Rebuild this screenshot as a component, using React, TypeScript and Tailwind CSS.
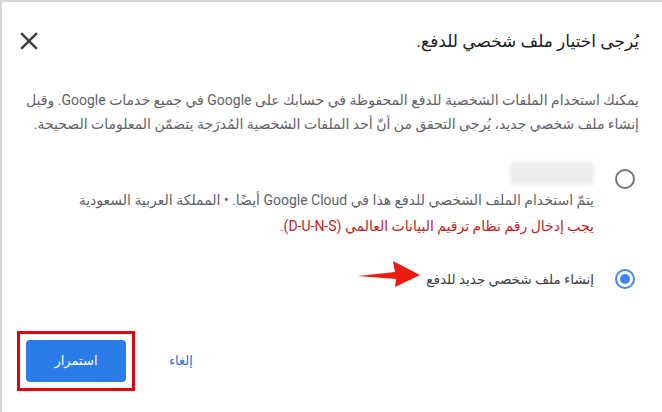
import React from "react";

function CloseIcon() {
  return (
    <svg width="30" height="30" viewBox="0 0 24 24" className="text-[#3c4043]">
      <path
        fill="currentColor"
        d="M19 6.41L17.59 5 12 10.59 6.41 5 5 6.41 10.59 12 5 17.59 6.41 19 12 13.41 17.59 19 19 17.59 13.41 12z"
      />
    </svg>
  );
}

function Radio({ checked }: { checked?: boolean }) {
  if (checked) {
    return (
      <div className="w-[20px] h-[20px] rounded-full border-2 border-[#4285f4] flex items-center justify-center shrink-0">
        <div className="w-[10px] h-[10px] rounded-full bg-[#3b82f6]" />
      </div>
    );
  }
  return <div className="w-[20px] h-[20px] rounded-full border-2 border-[#757575] shrink-0" />;
}

export default function App() {
  return (
    <main
      dir="rtl"
      className="relative w-[662px] h-[412px] bg-white border-l-2 border-t-2 border-[#d6d6d6] overflow-hidden"
      style={{ fontFamily: "Roboto, 'DejaVu Sans', sans-serif" }}
    >
      {/* header */}
      <header className="flex items-center justify-between pr-[23px] pl-[12px] pt-[24px]">
        <h1 className="text-[17px] leading-[26px] text-[#202124] font-normal">يُرجى اختيار ملف شخصي للدفع.</h1>
        <button className="flex items-center justify-center">
          <CloseIcon />
        </button>
      </header>

      {/* intro */}
      <p className="mt-[32px] pr-[23px] pl-[20px] text-[14px] leading-[24px] text-[#5f6368] whitespace-nowrap">
        يمكنك استخدام الملفات الشخصية للدفع المحفوظة في حسابك على Google في جميع خدمات Google. وقبل
        <br />
        إنشاء ملف شخصي جديد، يُرجى التحقق من أنّ أحد الملفات الشخصية المُدرَجة يتضمّن المعلومات الصحيحة.
      </p>

      {/* options */}
      <div className="mt-[26px] pr-[27px] pl-[24px] flex flex-col">
        <div className="flex items-start gap-[21px]">
          <div className="mt-[7px]">
            <Radio />
          </div>
          <div className="flex flex-col">
            <div className="w-[84px] h-[23px] bg-[#ececec] blur-[2px] rounded-sm" />
            <div className="mt-[2px] text-[14px] leading-[26px] text-[#5f6368] whitespace-nowrap">
              يتمّ استخدام الملف الشخصي للدفع هذا في Google Cloud أيضًا. • المملكة العربية السعودية
            </div>
            <div className="text-[14px] leading-[26px] text-[#c5221f]">
              يجب إدخال رقم نظام ترقيم البيانات العالمي (D-U-N-S).
            </div>
          </div>
        </div>

        <div className="mt-[28px] flex items-center gap-[21px] h-[24px]">
          <Radio checked />
          <span className="text-[13.5px] text-[#3c4043]">إنشاء ملف شخصي جديد للدفع</span>
        </div>
      </div>

      {/* actions */}
      <div className="mt-[40px] flex items-center justify-end gap-[34px] pl-[15px]">
        <button className="text-[13px] text-[#1a73e8]">إلغاء</button>
        <div className="border-[3px] border-[#e3000f] p-[6px]">
          <button className="w-[100px] h-[42px] rounded-[4px] bg-[#2a7de9] text-white text-[13px]">استمرار</button>
        </div>
      </div>

      {/* annotation arrow */}
      <svg className="absolute left-[353px] top-[256px]" width="70" height="32" viewBox="0 0 70 32">
        <polygon points="3,18 40,14 38,3 65,17 40,29 41,21" fill="#ea1c12" />
      </svg>
    </main>
  );
}
